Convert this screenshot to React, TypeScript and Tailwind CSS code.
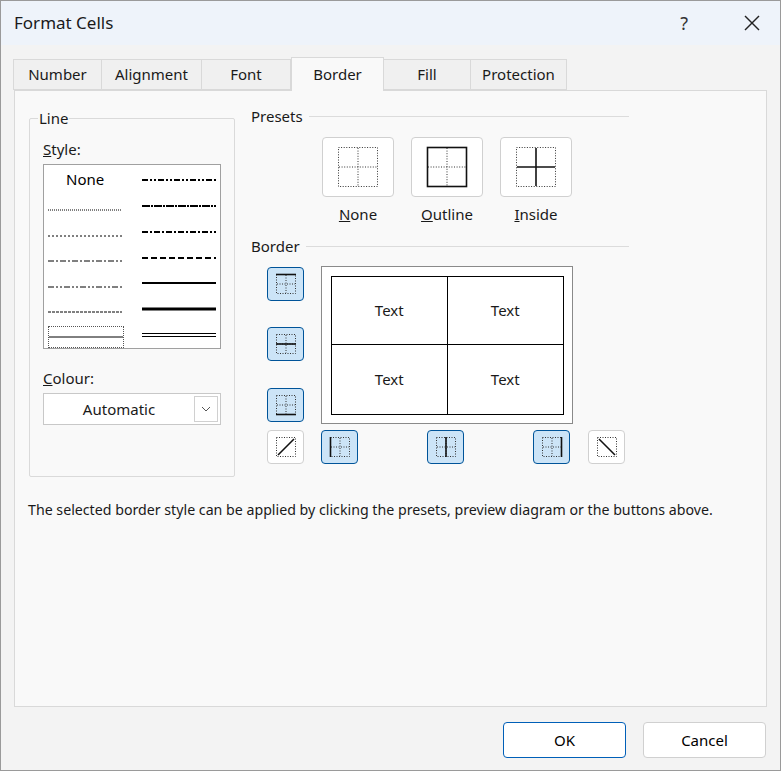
import React from 'react';

const font = { fontFamily: '"Segoe UI", "Noto Sans", "Open Sans", sans-serif' };

function Dotted({ inner = true }: { inner?: boolean }) {
  return (
    <g stroke="#333" strokeWidth="1" strokeDasharray="1 1.5" fill="none">
      <rect x="2.5" y="2.5" width="19" height="19" />
      {inner && <line x1="12" y1="3" x2="12" y2="21" />}
      {inner && <line x1="3" y1="12" x2="21" y2="12" />}
    </g>
  );
}

function MiniIcon({ kind }: { kind: string }) {
  return (
    <svg width="24" height="24" viewBox="0 0 24 24">
      <Dotted inner={kind !== 'diagUp' && kind !== 'diagDown'} />
      <g stroke="#111" strokeWidth="1.6">
        {kind === 'top' && <line x1="2" y1="2.5" x2="22" y2="2.5" />}
        {kind === 'midH' && <line x1="2" y1="12" x2="22" y2="12" />}
        {kind === 'bottom' && <line x1="2" y1="21.5" x2="22" y2="21.5" />}
        {kind === 'left' && <line x1="2.5" y1="2" x2="2.5" y2="22" />}
        {kind === 'midV' && <line x1="12" y1="2" x2="12" y2="22" />}
        {kind === 'right' && <line x1="21.5" y1="2" x2="21.5" y2="22" />}
        {kind === 'diagUp' && <line x1="4" y1="20" x2="20" y2="4" />}
        {kind === 'diagDown' && <line x1="4" y1="4" x2="20" y2="20" />}
      </g>
    </svg>
  );
}

function SmallBtn({ kind, on = true }: { kind: string; on?: boolean }) {
  return (
    <div
      className={`w-[37px] h-[34px] rounded-[4px] border flex items-center justify-center ${
        on ? 'bg-[#cce4f7] border-[#005499]' : 'bg-white border-[#d0d0d0]'
      }`}
    >
      <MiniIcon kind={kind} />
    </div>
  );
}

function PresetIcon({ kind }: { kind: string }) {
  return (
    <svg width="42" height="42" viewBox="0 0 42 42">
      <g stroke="#333" strokeDasharray="1 1.6" fill="none">
        {kind !== 'outline' && <rect x="1.5" y="1.5" width="39" height="39" />}
        {kind !== 'inside' && <line x1="21" y1="2" x2="21" y2="40" />}
        {kind !== 'inside' && <line x1="2" y1="21" x2="40" y2="21" />}
      </g>
      {kind === 'outline' && <rect x="1.5" y="1.5" width="39" height="39" stroke="#111" strokeWidth="1.6" fill="none" />}
      {kind === 'inside' && (
        <g stroke="#111" strokeWidth="1.6">
          <line x1="21" y1="2" x2="21" y2="40" />
          <line x1="2" y1="21" x2="40" y2="21" />
        </g>
      )}
    </svg>
  );
}

function Preset({ kind, label, u }: { kind: string; label: string; u: string }) {
  return (
    <div className="flex flex-col items-center w-[72px]">
      <div className="w-[72px] h-[60px] bg-white border border-[#d0d0d0] rounded-[4px] flex items-center justify-center">
        <PresetIcon kind={kind} />
      </div>
      <div className="mt-[6px] text-[15px] text-[#1a1a1a]">
        <span className="underline">{u}</span>
        {label.slice(1)}
      </div>
    </div>
  );
}

function LineSample({ dash, w = 1, double = false }: { dash?: string; w?: number; double?: boolean }) {
  return (
    <svg width="74" height="8" viewBox="0 0 74 8">
      {double ? (
        <g stroke="#000" strokeWidth="1">
          <line x1="0" y1="2.5" x2="74" y2="2.5" />
          <line x1="0" y1="5.5" x2="74" y2="5.5" />
        </g>
      ) : (
        <line x1="0" y1="4" x2="74" y2="4" stroke="#000" strokeWidth={w} strokeDasharray={dash} />
      )}
    </svg>
  );
}

function Legend({ children, className = '' }: { children: React.ReactNode; className?: string }) {
  return <span className={`text-[15px] text-[#1a1a1a] ${className}`}>{children}</span>;
}

export default function App() {
  const tabs = ['Number', 'Alignment', 'Font', 'Border', 'Fill', 'Protection'];
  const left = [
    { dash: '1 1' },
    { dash: '2 2' },
    { dash: '6 2 2 2' },
    { dash: '6 2 2 2 2 2' },
    { dash: '3 1' },
  ];
  const right = [
    { dash: '6 2 2 2 2 2', w: 2 },
    { dash: '8 1 2 1', w: 2 },
    { dash: '6 2 2 2', w: 2 },
    { dash: '6 3', w: 2 },
    { w: 2 },
    { w: 3 },
  ];
  return (
    <div className="w-[781px] h-[771px] bg-[#f3f3f3] border border-[#9a9a9a] flex flex-col overflow-hidden" style={font}>
      <div className="h-[44px] bg-[#eef3fa] flex items-center pl-[13px] pr-[20px] shrink-0">
        <span className="text-[17px] text-[#1a1a1a] flex-1">Format Cells</span>
        <span className="text-[18px] text-[#333] mr-[56px]">?</span>
        <svg width="16" height="16" viewBox="0 0 16 16" stroke="#222" strokeWidth="1.4">
          <line x1="1" y1="1" x2="15" y2="15" />
          <line x1="15" y1="1" x2="1" y2="15" />
        </svg>
      </div>

      <div className="flex pl-[13px] mt-[13px] h-[32px] items-end">
        {tabs.map((t, i) => {
          const w = [89, 101, 90, 93, 88, 97][i];
          const active = t === 'Border';
          return (
            <div
              key={t}
              className={`border border-[#d9d9d9] flex items-center justify-center text-[15px] text-[#1a1a1a] ${
                active ? 'bg-[#f9f9f9] h-[34px] border-b-0 relative z-10 -mb-px' : 'bg-[#f0f0f0] h-[31px] -ml-px'
              }`}
              style={{ width: w }}
            >
              {t}
            </div>
          );
        })}
      </div>

      <div className="mx-[13px] h-[617px] bg-[#f9f9f9] border border-[#d9d9d9] relative">
        <div className="flex pt-[14px]">
          {/* Line group */}
          <div className="ml-[14px] w-[206px] h-[359px] border border-[#dadada] rounded-[2px] mt-[13px] relative">
            <Legend className="absolute -top-[12px] left-[8px] bg-[#f9f9f9] px-[1px]">Line</Legend>
            <div className="pl-[13px] pt-[18px]">
              <Legend><span className="underline">S</span>tyle:</Legend>
              <div className="mt-[3px] w-[178px] h-[185px] bg-white border border-[#a0a0a0] flex px-[4px] pt-[6px]">
                <div className="w-[86px] flex flex-col">
                  <div className="h-[20px] text-[15px] pl-[18px] leading-[16px]">None</div>
                  {left.map((l, i) => (
                    <div key={i} className="h-[26px] flex items-end pb-[2px]">
                      <LineSample dash={l.dash} />
                    </div>
                  ))}
                  <div className="mt-[8px] w-[76px] h-[22px] border border-dotted border-[#555] flex items-center">
                    <LineSample w={1} />
                  </div>
                </div>
                <div className="w-[86px] flex flex-col pl-[10px]">
                  {right.map((l, i) => (
                    <div key={i} className="h-[26px] flex items-center" style={{ marginTop: i === 0 ? -4 : 0 }}>
                      <LineSample dash={l.dash} w={l.w} />
                    </div>
                  ))}
                  <div className="h-[26px] flex items-center">
                    <LineSample double />
                  </div>
                </div>
              </div>
              <div className="mt-[17px]">
                <Legend><span className="underline">C</span>olour:</Legend>
              </div>
              <div className="mt-[3px] w-[178px] h-[32px] bg-white border border-[#c8c8c8] flex items-center">
                <span className="flex-1 text-center text-[15px] text-[#1a1a1a]">Automatic</span>
                <div className="w-[24px] h-[26px] border border-[#d0d0d0] mr-[2px] flex items-center justify-center">
                  <svg width="10" height="6" viewBox="0 0 10 6" stroke="#555" fill="none">
                    <path d="M1 1l4 4 4-4" />
                  </svg>
                </div>
              </div>
            </div>
          </div>

          {/* Right side */}
          <div className="ml-[16px] flex flex-col w-[378px]">
            <div className="flex items-center">
              <Legend>Presets</Legend>
              <div className="flex-1 h-px bg-[#dcdcdc] ml-[6px]" />
            </div>
            <div className="flex gap-[17px] ml-[71px] mt-[9px]">
              <Preset kind="none" label="None" u="N" />
              <Preset kind="outline" label="Outline" u="O" />
              <Preset kind="inside" label="Inside" u="I" />
            </div>
            <div className="flex items-center mt-[10px]">
              <Legend>Border</Legend>
              <div className="flex-1 h-px bg-[#dcdcdc] ml-[6px]" />
            </div>
            <div className="flex mt-[8px] ml-[16px]">
              <div className="flex flex-col w-[37px]">
                <div className="mt-[1px]"><SmallBtn kind="top" /></div>
                <div className="mt-[26px]"><SmallBtn kind="midH" /></div>
                <div className="mt-[27px]"><SmallBtn kind="bottom" /></div>
              </div>
              <div className="ml-[17px] w-[252px] h-[158px] bg-white border border-[#8a8a8a] relative">
                <div className="absolute left-[9px] top-[9px] w-[233px] h-[139px] border-[1.5px] border-black grid grid-cols-2 grid-rows-2">
                  {[0, 1, 2, 3].map((i) => (
                    <div
                      key={i}
                      className={`flex items-center justify-center text-[15px] text-[#1a1a1a] ${i % 2 === 0 ? 'border-r-[1.5px] border-black' : ''} ${i < 2 ? 'border-b-[1.5px] border-black' : ''}`}
                    >
                      Text
                    </div>
                  ))}
                </div>
              </div>
            </div>
            <div className="flex mt-[6px] ml-[16px]">
              <SmallBtn kind="diagUp" on={false} />
              <div className="ml-[17px]"><SmallBtn kind="left" /></div>
              <div className="ml-[69px]"><SmallBtn kind="midV" /></div>
              <div className="ml-[69px]"><SmallBtn kind="right" /></div>
              <div className="ml-[18px]"><SmallBtn kind="diagDown" on={false} /></div>
            </div>
          </div>
        </div>
        <div className="mt-[22px] ml-[13px] text-[14.2px] text-[#1a1a1a]">
          The selected border style can be applied by clicking the presets, preview diagram or the buttons above.
        </div>
      </div>

      <div className="flex justify-end gap-[17px] pr-[14px] mt-[15px]">
        <div className="w-[123px] h-[36px] rounded-[4px] border-[1.5px] border-[#005fb8] bg-white flex items-center justify-center text-[15px]">OK</div>
        <div className="w-[123px] h-[36px] rounded-[4px] border border-[#d0d0d0] bg-white flex items-center justify-center text-[15px]">Cancel</div>
      </div>
    </div>
  );
}
